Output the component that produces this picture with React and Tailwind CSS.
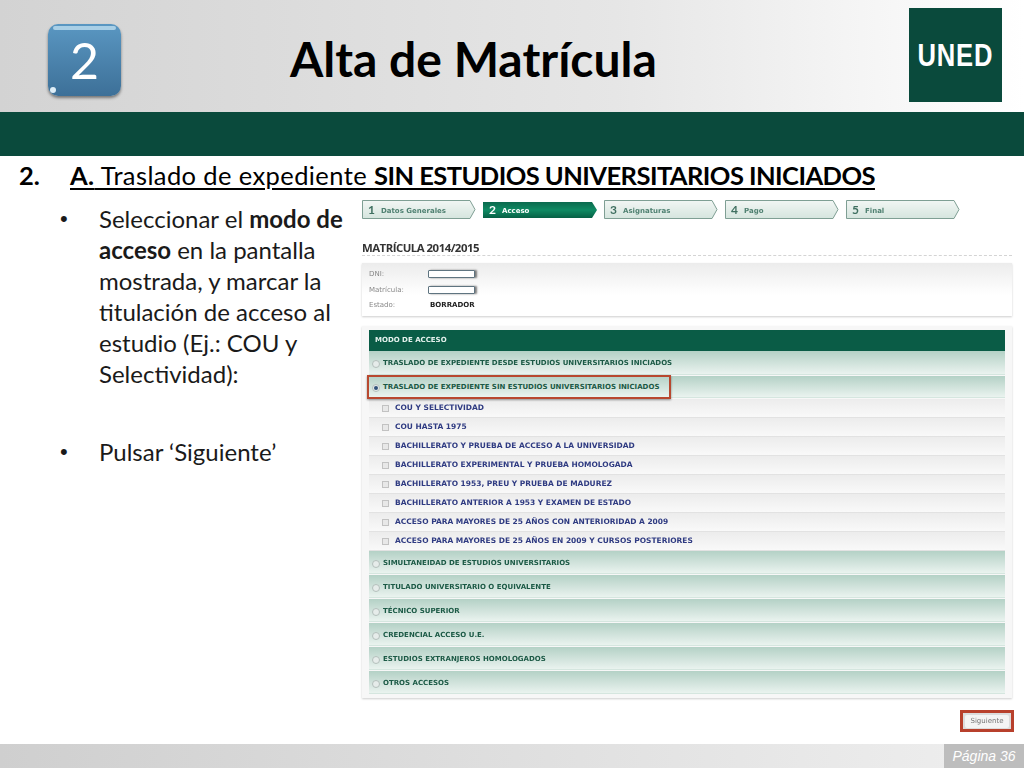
import React from 'react';

const steps = [
  { n: '1', label: 'Datos Generales' },
  { n: '2', label: 'Acceso', active: true },
  { n: '3', label: 'Asignaturas' },
  { n: '4', label: 'Pago' },
  { n: '5', label: 'Final' },
];

const checks = [
  'COU Y SELECTIVIDAD',
  'COU HASTA 1975',
  'BACHILLERATO Y PRUEBA DE ACCESO A LA UNIVERSIDAD',
  'BACHILLERATO EXPERIMENTAL Y PRUEBA HOMOLOGADA',
  'BACHILLERATO 1953, PREU Y PRUEBA DE MADUREZ',
  'BACHILLERATO ANTERIOR A 1953 Y EXAMEN DE ESTADO',
  'ACCESO PARA MAYORES DE 25 AÑOS CON ANTERIORIDAD A 2009',
  'ACCESO PARA MAYORES DE 25 AÑOS EN 2009 Y CURSOS POSTERIORES',
];

const otherModes = [
  'SIMULTANEIDAD DE ESTUDIOS UNIVERSITARIOS',
  'TITULADO UNIVERSITARIO O EQUIVALENTE',
  'TÉCNICO SUPERIOR',
  'CREDENCIAL ACCESO U.E.',
  'ESTUDIOS EXTRANJEROS HOMOLOGADOS',
  'OTROS ACCESOS',
];

const Step = ({ n, label, active }) => (
  <div className="relative w-[114px] h-[19px] flex items-center pl-[6px] gap-[6px]">
    <svg className="absolute inset-0" width="114" height="19" viewBox="0 0 114 19">
      <defs>
        <linearGradient id="stepOff" x1="0" y1="0" x2="0" y2="1">
          <stop offset="0" stopColor="#f2f6f4" />
          <stop offset="1" stopColor="#d5e5de" />
        </linearGradient>
        <linearGradient id="stepOn" x1="0" y1="0" x2="0" y2="1">
          <stop offset="0" stopColor="#0b6a4e" />
          <stop offset="0.5" stopColor="#0f8a63" />
          <stop offset="1" stopColor="#066045" />
        </linearGradient>
      </defs>
      {active ? (
        <path d="M0 2H109L114 10L109 18H0Z" fill="url(#stepOn)" />
      ) : (
        <path d="M0.5 0.5H108L113 9.5L108 18.5H0.5Z" fill="url(#stepOff)" stroke="#7f9f94" />
      )}
    </svg>
    <span className={`relative font-['Lato',sans-serif] text-[12px] font-bold ${active ? 'text-white' : 'text-[#3f6f60]'}`}>{n}</span>
    <span className={`relative mt-[3px] font-['DejaVu_Sans',sans-serif] text-[7px] font-bold ${active ? 'text-white' : 'text-[#4f8071]'}`}>{label}</span>
  </div>
);

const Radio = ({ checked }) => (
  <span className="w-[8px] h-[8px] mt-[3px] rounded-full border border-[#b4c0bc] bg-[#e6ecea] flex items-center justify-center shrink-0">
    {checked && <span className="w-[4px] h-[4px] rounded-full bg-[#31527a]" />}
  </span>
);

const RadioRow = ({ label, checked, className }) => (
  <div className={`flex items-center pl-[3px] gap-[3px] bg-gradient-to-b from-[#b4d1c6] to-[#eaf3ef] border-b border-[#d5e6df] ${className}`}>
    <Radio checked={checked} />
    <span className="mt-[2px] font-['DejaVu_Sans',sans-serif] text-[7px] font-bold text-[#1c5a46] whitespace-nowrap">{label}</span>
  </div>
);

const App = () => {
  return (
    <div className="w-[1024px] h-[768px] flex flex-col overflow-hidden bg-white font-['Lato',sans-serif] text-black">
      <header className="h-[112px] relative flex items-center bg-gradient-to-r from-[#d3d3d3] via-[#e6e6e6] via-60% to-white">
        <div className="ml-[48px] mt-[8px] w-[73px] h-[72px] rounded-[10px] bg-gradient-to-b from-[#5a97c2] to-[#3d7098] shadow-[0_2px_3px_rgba(0,0,0,0.45)] flex items-center justify-center relative">
          <span className="absolute left-[5px] right-[5px] top-[2px] h-[4px] rounded-full bg-[#a9cfe6]" />
          <span className="absolute left-[2px] bottom-[3px] w-[6px] h-[6px] rounded-full bg-[#dfeef7]" />
          <span className="text-white text-[50px] leading-none">2</span>
        </div>
        <h1 className="ml-[169px] mt-[5px] text-[48px] font-bold leading-none text-black whitespace-nowrap">Alta de Matrícula</h1>
        <div className="absolute left-[909px] top-[8px] w-[93px] h-[94px] bg-[#0a4a3c] flex items-center justify-center">
          <span className="font-['Liberation_Sans',sans-serif] font-bold text-white text-[32px] leading-none scale-x-[0.8] tracking-[1px]">UNED</span>
        </div>
      </header>
      <div className="h-[44px] bg-[#0a4a3c]" />

      <main className="flex-1 flex flex-col">
        <h2 className="pt-[3px] h-[35px] flex text-[25.5px] leading-[32px] whitespace-nowrap">
          <span className="ml-[19px] w-[51px] font-bold">2.</span>
          <span className="underline decoration-[2px] underline-offset-[3px] tracking-[0.4px]">
            <b>A.</b> Traslado de expediente <b className="tracking-[-0.55px]">SIN ESTUDIOS UNIVERSITARIOS INICIADOS</b>
          </span>
        </h2>

        <div className="mt-[9px] flex">
          <div className="w-[362px] pt-[3px] pl-[60px] text-[24px] leading-[31px] text-[#1a1a1a]">
            <div className="flex">
              <span className="w-[39px] shrink-0 font-['Liberation_Sans',sans-serif] text-[22px]">•</span>
              <p className="w-[250px] whitespace-nowrap">
                Seleccionar el <b>modo de</b><br />
                <b>acceso</b> en la pantalla<br />
                mostrada, y marcar la<br />
                titulación de acceso al<br />
                estudio (Ej.: COU y<br />
                Selectividad):
              </p>
            </div>
            <div className="flex mt-[47px]">
              <span className="w-[39px] shrink-0 font-['Liberation_Sans',sans-serif] text-[22px]">•</span>
              <p>Pulsar ‘Siguiente’</p>
            </div>
          </div>

          <div className="w-[652px] blur-[0.3px]">
            <div className="flex gap-[7px]">
              {steps.map((s) => (
                <Step key={s.n} {...s} />
              ))}
            </div>

            <div className="w-[650px] mt-[22px] h-[15px] border-b border-dashed border-[#d4d4d4]">
              <h3 className="font-['Open_Sans',sans-serif] text-[11.4px] leading-[14px] font-bold tracking-[-0.5px] text-[#333]">MATRÍCULA 2014/2015</h3>
            </div>

            <div className="w-[650px] mt-[7px] h-[53px] pl-[7px] pt-[3px] bg-gradient-to-b from-[#ececec] to-white to-60% shadow-[0_1px_2px_rgba(0,0,0,0.2)] font-['DejaVu_Sans',sans-serif] text-[7px] text-[#888]">
              {['DNI:', 'Matrícula:'].map((l) => (
                <div key={l} className="flex items-center h-[16px]">
                  <span className="w-[59px]">{l}</span>
                  <span className="w-[47px] h-[8px] border border-[#5f7480] rounded-[1px] bg-white shadow-[2px_0_2px_rgba(0,0,0,0.5)]" />
                </div>
              ))}
              <div className="flex items-center h-[15px]">
                <span className="w-[61px]">Estado:</span>
                <span className="font-bold text-[#222]">BORRADOR</span>
              </div>
            </div>

            <div className="w-[650px] mt-[10px] h-[372px] px-[7px] py-[4px] bg-[#f7f7f7] shadow-[0_1px_2px_rgba(0,0,0,0.2)]">
              <div className="h-[21px] pl-[6px] flex items-center bg-[#0a5c46] font-['DejaVu_Sans',sans-serif] text-[7px] font-bold text-[#e6f2ee]">MODO DE ACCESO</div>
              <RadioRow label="TRASLADO DE EXPEDIENTE DESDE ESTUDIOS UNIVERSITARIOS INICIADOS" className="h-[24px] mb-[1px]" />
              <div className="relative mb-[1px]">
                <RadioRow label="TRASLADO DE EXPEDIENTE SIN ESTUDIOS UNIVERSITARIOS INICIADOS" checked className="h-[22px]" />
                <div className="absolute left-[-2px] top-[-1px] w-[304px] h-[24px] border-2 border-[#b8482f] shadow-[0_1px_2px_rgba(0,0,0,0.4)]" />
              </div>
              {checks.map((c) => (
                <div key={c} className="h-[19px] flex items-center pl-[13px] gap-[6px] bg-gradient-to-b from-[#ececec] to-[#f9f9f9] border-b border-[#e2e2e2]">
                  <span className="w-[7px] h-[7px] border border-[#c2c2c2] bg-[#e8e8e8] shrink-0" />
                  <span className="font-['DejaVu_Sans',sans-serif] text-[7.48px] font-bold text-[#2f3b82] whitespace-nowrap">{c}</span>
                </div>
              ))}
              <div className="flex flex-col gap-[1px]">
                {otherModes.map((m) => (
                  <RadioRow key={m} label={m} className="h-[23px]" />
                ))}
              </div>
            </div>

            <div className="mt-[12px] flex justify-end">
              <div className="w-[54px] h-[22px] border-[3px] border-[#b8402c] bg-[#dcdcdc] flex items-center justify-center">
                <span className="w-[44px] h-[13px] rounded-[2px] bg-[#f4f4f4] flex items-center justify-center font-['DejaVu_Sans',sans-serif] text-[7px] text-[#777]">Siguiente</span>
              </div>
            </div>
          </div>
        </div>
      </main>

      <footer className="h-[24px] flex bg-gradient-to-r from-[#cfcfcf] to-[#efefef]">
        <div className="ml-auto w-[80px] bg-[#bdbdbd] flex items-center justify-center font-['Liberation_Sans',sans-serif] italic text-[14px] text-white">Página 36</div>
      </footer>
    </div>
  );
};

export default App;
